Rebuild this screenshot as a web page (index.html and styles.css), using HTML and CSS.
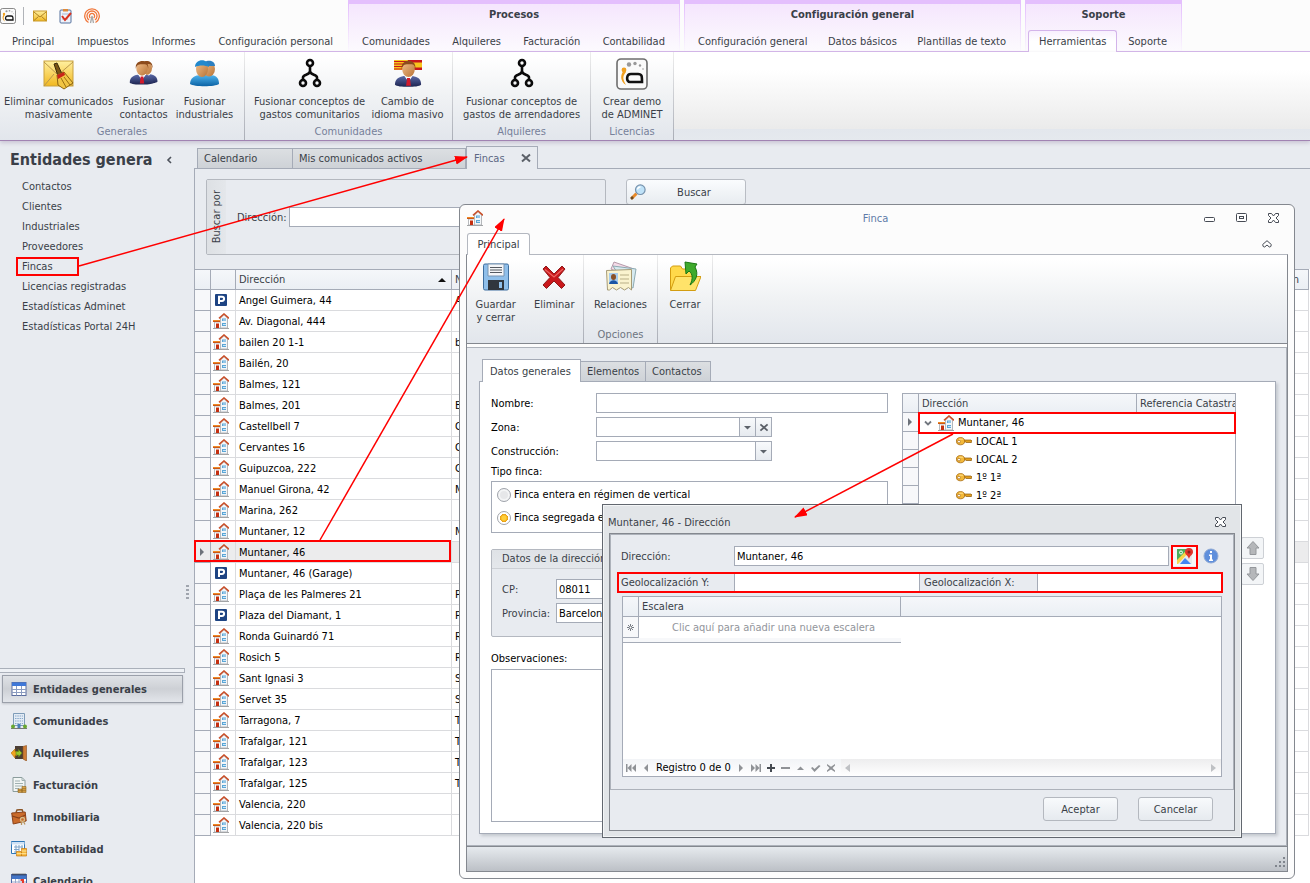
FILE: index.html
```html
<!DOCTYPE html>
<html lang="es">
<head>
<meta charset="utf-8">
<title>Adminet - Fincas</title>
<link rel="stylesheet" href="styles.css">
</head>
<body>
<svg class="defs" width="0" height="0" aria-hidden="true">
  <defs>
    <linearGradient id="suit" x1="0" y1="0" x2="0" y2="1"><stop offset="0" stop-color="#5a6aa8"/><stop offset="1" stop-color="#1d2450"/></linearGradient>
    <linearGradient id="skin" x1="0" y1="0" x2="1" y2="1"><stop offset="0" stop-color="#f3c08c"/><stop offset="1" stop-color="#b87437"/></linearGradient>
    <linearGradient id="blue" x1="0" y1="0" x2="0" y2="1"><stop offset="0" stop-color="#4fb4ee"/><stop offset="1" stop-color="#0b62a4"/></linearGradient>
    <linearGradient id="gold" x1="0" y1="0" x2="0" y2="1"><stop offset="0" stop-color="#fff0a0"/><stop offset="1" stop-color="#f2b820"/></linearGradient>
    <symbol id="house" viewBox="0 0 16 16">
      <path d="M7.500 5L11 1.500 14.500 5V15h-7z" fill="#f4f6f8" stroke="#b4b7bb"/>
      <path d="M1.500 9h6v6h-6z" fill="#fff" stroke="#b9bbbe"/>
      <path d="M0 7h7v2H0z" fill="#f08a24"/><path d="M0 8.500h7" stroke="#c9571a"/>
      <path d="M6 5.300L11 1l5 4.300" fill="none" stroke="#c9502a" stroke-width="1.600"/>
      <path d="M9 5.500h4v2.500H9zM9 10h4v3H9z" fill="#5aa5d6"/>
      <path d="M10 6.500h3v1h-3zM10 11h3v1h-3z" fill="#c9e6f8"/>
      <path d="M3 10.500h3V15H3z" fill="#c52f10"/>
      <path d="M0 15.500h16" stroke="#a2a4a6"/>
    </symbol>
    <symbol id="parking" viewBox="0 0 16 16">
      <rect x="2" y="2" width="12" height="12" rx="1" fill="#1e4483"/>
      <path d="M6 12V4.700h3a2.100 2.100 0 010 4.200H6" fill="none" stroke="#fff" stroke-width="2"/>
    </symbol>
    <symbol id="key" viewBox="0 0 16 16">
      <path d="M7 7h8l1 1-1 2-1-1-1 1-1-1-1 1-1-1H7z" fill="#e3a021" stroke="#8e5906" stroke-width=".7"/>
      <ellipse cx="4.500" cy="8.200" rx="4.100" ry="3.600" fill="#f3b93a" stroke="#a76a10" stroke-width=".8"/>
      <ellipse cx="3" cy="8.600" rx="1.400" ry="1.400" fill="#fff" stroke="#a76a10" stroke-width=".7"/>
      <path d="M3 6.200h4" stroke="#ffe08a"/>
    </symbol>
    <symbol id="fork" viewBox="0 0 32 32">
      <g fill="none" stroke="#0a0a0a" stroke-width="2.600"><circle cx="16" cy="5" r="3"/><circle cx="9" cy="25" r="3"/><circle cx="23" cy="25" r="3"/><path d="M16 8v6M9 22v-2.500c0-3.500 7-2 7-6.500 0 4.500 7 3 7 6.500V22"/></g>
    </symbol>
    <symbol id="logo" viewBox="0 0 32 32">
      <rect x="1" y="1" width="30" height="30" rx="4" fill="#fafafa" stroke="#6d6d6d" stroke-width="1.600"/>
      <path d="M15 16h7c4 0 4 2 4 8H14c-4 0-4-8 1-8" fill="none" stroke="#111" stroke-width="2.600"/>
      <path d="M8 12c-4 5-4 11 2 15-3-6-4-8 0-13z" fill="#f0a020"/><circle cx="8" cy="12" r="2.400" fill="#f0a020"/>
      <circle cx="13" cy="6.500" r="2.200" fill="#999"/><circle cx="19" cy="5.500" r="1.700" fill="#999"/><circle cx="24" cy="7.500" r="1.200" fill="#999"/><circle cx="27" cy="11" r=".8" fill="#999"/>
    </symbol>
    <symbol id="man" viewBox="0 0 32 32">
      <path d="M2 27c0-6 4-8 9-9h9c6 1 9 3 9 9-3 3-24 3-27 0z" fill="url(#suit)"/>
      <path d="M11 17l5 7 5-7z" fill="#fff"/><path d="M14.500 20h3l1 8h-5z" fill="#d21a2b"/>
      <ellipse cx="16" cy="11" rx="6.500" ry="8" fill="url(#skin)"/>
      <path d="M9 11C7 0 25-1 23 11c-1-5-2-5-6-5s-7 0-8 5z" fill="#8c4b1c"/>
    </symbol>
    <symbol id="arrow-down" viewBox="0 0 9 9"><path d="M1 3h7L4.500 6.500z" fill="#5d636b"/></symbol>
    <symbol id="cross-sm" viewBox="0 0 10 10"><path d="M1 1.500l8 7M9 1.500l-8 7" stroke="#5b6068" stroke-width="2"/></symbol>
    <symbol id="cross-outline" viewBox="0 0 11 10"><path d="M.5.500h3l2 2.500 2-2.500h3v2L8 5l2.500 2.500v2h-3l-2-2.500-2 2.500h-3v-2L3 5 .5 2.500z" fill="#fff" stroke="#464b54"/></symbol>
  </defs>
</svg>

<header class="app-head">
  <div class="head-main">
    <div class="quick">
      <button aria-label="Adminet"><svg width="16" height="16"><use href="#logo"/></svg></button>
      <i class="quick-sep"></i>
      <button aria-label="Mensajes"><svg width="16" height="16" viewBox="0 0 16 16"><rect x="1.500" y="3" width="13" height="10" fill="url(#gold)" stroke="#c99a2c"/><path d="M2 4l6 5 6-5M2 12.500l4.500-4M14 12.500l-4.500-4" fill="none" stroke="#b08324"/></svg></button>
      <button aria-label="Tareas"><svg width="16" height="16" viewBox="0 0 16 16"><rect x="2" y="2" width="11" height="13" rx="1" fill="#eef3fb" stroke="#55709d"/><path d="M5 1h5v2.500H5z" fill="#df8b3b"/><path d="M4 6h7M4 11h6" stroke="#a9b9d4"/><path d="M4 8l3 4 6-7" fill="none" stroke="#d8321f" stroke-width="2"/></svg></button>
      <button aria-label="Conexión"><svg width="16" height="16" viewBox="0 0 16 16" fill="none" stroke="#f0763a" stroke-width="1.300"><path d="M4.500 14.500a7.300 7.300 0 117 0M5 12a5 5 0 116 0M6.300 10a2.600 2.600 0 113.400 0"/><path d="M8 8l-1.500 7M8 8l1.500 7" stroke="#a8a8a8"/></svg></button>
    </div>
    <nav class="tabs tabs-main"><button>Principal</button><button>Impuestos</button><button>Informes</button><button>Configuración personal</button></nav>
  </div>
  <section class="context c1"><h2>Procesos</h2><nav class="tabs"><button>Comunidades</button><button>Alquileres</button><button>Facturación</button><button>Contabilidad</button></nav></section>
  <section class="context c2"><h2>Configuración general</h2><nav class="tabs"><button>Configuración general</button><button>Datos básicos</button><button>Plantillas de texto</button></nav></section>
  <section class="context c3"><h2>Soporte</h2><nav class="tabs tabs-support"><button class="active">Herramientas</button><button>Soporte</button></nav></section>
</header>

<div class="ribbon">
  <section class="rgroup g1">
    <div class="rbuttons">
      <button class="w108"><svg width="32" height="32" viewBox="0 0 32 32"><rect x="1" y="3" width="29" height="25" fill="url(#gold)" stroke="#c9a13e"/><path d="M1 4l14 13L30 4M1 28l10-12M30 28L20 17" fill="none" stroke="#b9974c"/><path d="M11 6l3-1 5 11-4 2z" fill="#7a5414" stroke="#3c2b0a"/><path d="M14 17l7-3 9 11-9 6-6-4z" fill="#f1c544" stroke="#8c6511"/><path d="M14 17l7-3 1 3-7 4z" fill="#c92419"/><path d="M18 20l5 9M21 19l6 8" stroke="#9b7012"/></svg><span>Eliminar comunicados<br>masivamente</span></button>
      <button class="w57"><svg width="32" height="32" viewBox="0 0 32 32"><use href="#man" x="5" y="1" width="27" height="27"/><use href="#man" x="0" y="1" width="28" height="28"/></svg><span>Fusionar<br>contactos</span></button>
      <button class="w60"><svg width="32" height="32" viewBox="0 0 32 32"><path d="M1 26c0-6 5-9 11-9h9c6 0 9 3 9 9-4 3-25 3-29 0z" fill="url(#blue)"/><ellipse cx="20" cy="11" rx="6" ry="7.500" fill="url(#skin)"/><path d="M14 8c0-7 12-7 12 0z" fill="#2c7fc0"/><ellipse cx="13" cy="11" rx="6" ry="8" fill="url(#skin)"/><path d="M6 9c0-9 14-9 14 0-4-2-10-2-14 0z" fill="#2389cd"/></svg><span>Fusionar<br>industriales</span></button>
    </div>
    <h3>Generales</h3>
  </section>
  <section class="rgroup g2">
    <div class="rbuttons">
      <button class="w116"><svg width="32" height="32"><use href="#fork"/></svg><span>Fusionar conceptos de<br>gastos comunitarios</span></button>
      <button class="w76"><svg width="32" height="32" viewBox="0 0 32 32"><path d="M2 2h14v10H2z" fill="#f6c51c"/><path d="M2 3.500h14M2 6h14M2 8.500h14M2 11h14" stroke="#c8161d" stroke-width="1.200"/><path d="M16 2h14v10H16z" fill="#c8161d"/><path d="M16 4.500h14v5H16z" fill="#f6c51c"/><use href="#man" x="1" y="0" width="31" height="32"/></svg><span>Cambio de<br>idioma masivo</span></button>
    </div>
    <h3>Comunidades</h3>
  </section>
  <section class="rgroup g3">
    <div class="rbuttons"><button class="w124"><svg width="32" height="32"><use href="#fork"/></svg><span>Fusionar conceptos de<br>gastos de arrendadores</span></button></div>
    <h3>Alquileres</h3>
  </section>
  <section class="rgroup g4">
    <div class="rbuttons"><button class="w76"><svg width="32" height="32"><use href="#logo"/></svg><span>Crear demo<br>de ADMINET</span></button></div>
    <h3>Licencias</h3>
  </section>
</div>

<div class="workspace">
  <aside class="side">
    <div class="side-top">
      <h1><span>Entidades generales</span><button aria-label="Contraer"><svg width="8" height="8" viewBox="0 0 8 8"><path d="M6 1L3 4l3 3" fill="none" stroke="#4d525b" stroke-width="1.600"/></svg></button></h1>
      <nav class="side-links"><a href="#">Contactos</a><a href="#">Clientes</a><a href="#">Industriales</a><a href="#">Proveedores</a><a href="#">Fincas</a><a href="#">Licencias registradas</a><a href="#">Estadísticas Adminet</a><a href="#">Estadísticas Portal 24H</a></nav>
    </div>
    <i class="grip"></i>
    <div class="side-split"></div>
    <nav class="modules">
      <button class="current"><svg width="16" height="16" viewBox="0 0 16 16"><rect x="1" y="1.500" width="14" height="13" fill="#fff" stroke="#5b6d9e"/><path d="M1 1.500h14v3.500H1z" fill="#3f78d8"/><path d="M1 8.500h14M1 11.500h14M5.500 5v9.500M10.500 5v9.500" stroke="#8b9cc0"/></svg>Entidades generales</button>
      <button><svg width="16" height="16" viewBox="0 0 16 16"><path d="M2.500.500h11v12h-11z" fill="#e4ecf5" stroke="#7f9cb8"/><path d="M4 3h8M4 5.500h8M4 8h8M4 10.500h8" stroke="#89a9cb" stroke-dasharray="1.500 .8"/><path d="M6.500 11h3v4h-3z" fill="#4a7fb8"/><path d="M0 15.500h16" stroke="#777" /><circle cx="2" cy="13.500" r="2" fill="#69a82f"/><circle cx="14" cy="13.500" r="2" fill="#69a82f"/></svg>Comunidades</button>
      <button><svg width="16" height="16" viewBox="0 0 16 16"><path d="M4 1h8v13H4z" fill="#4b3d34"/><path d="M12 1.500l3.500-1V16L12 14z" fill="#cd7c35" stroke="#8e501c" stroke-width=".6"/><path d="M0 8l4-4v2.500h2v4H4V13z" fill="#efa421" stroke="#b8720e" stroke-width=".6"/><path d="M11 8L7.500 4.500v2H5v3.500h2.500v2z" fill="#9bc72d" stroke="#5e8616" stroke-width=".6"/></svg>Alquileres</button>
      <button><svg width="16" height="16" viewBox="0 0 16 16"><path d="M2 .5h9l3 3v11H2z" fill="#f2f6f5" stroke="#8b9c9c"/><path d="M11 .5v3h3M4 4h5M4 6.500h8M4 9h8M4 11.500h4" fill="none" stroke="#9fb0b0"/><path d="M7 12h4v3.500H7zM11 9.500h4v6h-4z" fill="#d9a44b" stroke="#8e6520" stroke-width=".6"/><path d="M7 13.700h8M11 11.700h4" stroke="#8e6520" stroke-width=".6"/></svg>Facturación</button>
      <button><svg width="16" height="16" viewBox="0 0 16 16"><path d="M5 3.500L6 1l5-.5 1 2.500" fill="none" stroke="#8b5526" stroke-width="1.500"/><path d="M.7 4l13.500-1 1 9-13 3z" fill="#ca6b2b" stroke="#8b431a"/><path d="M1 7l7 2 6.500-3" fill="none" stroke="#87401a" stroke-width="1.300"/><circle cx="11.500" cy="10.500" r="2" fill="none" stroke="#d8ba86" stroke-width="1.300"/><path d="M12.500 12.500l1.500 3M10.500 12.500V16" stroke="#b9945d" stroke-width="1.300"/></svg>Inmobiliaria</button>
      <button><svg width="16" height="16" viewBox="0 0 16 16"><path d="M.5.500h13v12H.5z" fill="#fff" stroke="#2f78b8"/><path d="M.5 1h13v2.500H.5z" fill="#cfe2f5"/><path d="M3 6h9M3 8.500h5M3 11h4M5 4v8M8 4v6M11 4v4" stroke="#7fa5c9"/><path d="M5.500 10.500h5v4.500h-5zM10.500 7.500h5v7.500h-5z" fill="#f6b73b" stroke="#c97a10" stroke-width=".7"/><path d="M5.500 12.700h10M10.500 10h5" stroke="#fff0b5" stroke-width=".8"/></svg>Contabilidad</button>
      <button><svg width="16" height="16" viewBox="0 0 16 16"><rect x=".5" y="1.500" width="15" height="14" fill="#fff" stroke="#4b68a8"/><path d="M1 2h14v4H1z" fill="#4375c8"/><path d="M1.500 1.500h13" stroke="#333" stroke-dasharray="1 1" stroke-width="2"/><path d="M1 9h14M1 12h14M4.500 6v9M8 6v9M11.500 6v9" stroke="#9aa8cb"/><path d="M9.500 7h2.500v4" stroke="#e5392b" stroke-width="2" fill="none"/></svg>Calendario</button>
    </nav>
  </aside>

  <main class="doc">
    <nav class="doc-tabs"><button class="t1">Calendario</button><button class="t2">Mis comunicados activos</button><button class="t3 active">Fincas<svg width="10" height="10"><use href="#cross-sm"/></svg></button></nav>
    <div class="doc-body">
      <form class="search">
        <fieldset><div class="vlabel"><span>Buscar por</span></div><label for="q">Dirección:</label><input id="q" type="text"></fieldset>
        <button type="button"><svg width="16" height="16" viewBox="0 0 16 16"><path d="M1.500 14.500l5-5" stroke="#e88a2a" stroke-width="3"/><path d="M1 15l2-2" stroke="#6d4b22" stroke-width="2.500"/><circle cx="10.300" cy="5.700" r="4.800" fill="#bfe2f8" stroke="#7591ac" stroke-width="1.200"/><path d="M7.500 5.500a3 3 0 013-2.500" stroke="#fff" stroke-width="1.300" fill="none"/></svg><span>Buscar</span></button>
      </form>
      <table class="grid">
        <colgroup><col class="k1"><col class="k2"><col class="k3"><col><col class="k5"></colgroup>
        <thead><tr><th></th><th></th><th>Dirección<svg width="8" height="5" viewBox="0 0 8 5"><path d="M0 5l4-4 4 4z" fill="#111"/></svg></th><th>Nombre</th><th class="end">Población</th></tr></thead>
        <tbody>
          <tr><td></td><td><svg><use href="#parking"/></svg></td><td>Angel Guimera, 44</td><td>A</td><td></td></tr>
          <tr><td></td><td><svg><use href="#house"/></svg></td><td>Av. Diagonal, 444</td><td></td><td></td></tr>
          <tr><td></td><td><svg><use href="#house"/></svg></td><td>bailen 20 1-1</td><td>b</td><td></td></tr>
          <tr><td></td><td><svg><use href="#house"/></svg></td><td>Bailén, 20</td><td></td><td></td></tr>
          <tr><td></td><td><svg><use href="#house"/></svg></td><td>Balmes, 121</td><td></td><td></td></tr>
          <tr><td></td><td><svg><use href="#house"/></svg></td><td>Balmes, 201</td><td>B</td><td></td></tr>
          <tr><td></td><td><svg><use href="#house"/></svg></td><td>Castellbell 7</td><td>C</td><td></td></tr>
          <tr><td></td><td><svg><use href="#house"/></svg></td><td>Cervantes 16</td><td>C</td><td></td></tr>
          <tr><td></td><td><svg><use href="#house"/></svg></td><td>Guipuzcoa, 222</td><td>G</td><td></td></tr>
          <tr><td></td><td><svg><use href="#house"/></svg></td><td>Manuel Girona, 42</td><td>M</td><td></td></tr>
          <tr><td></td><td><svg><use href="#house"/></svg></td><td>Marina, 262</td><td></td><td></td></tr>
          <tr><td></td><td><svg><use href="#house"/></svg></td><td>Muntaner, 12</td><td>M</td><td></td></tr>
          <tr class="sel"><td><svg class="cur" viewBox="0 0 5 8"><path d="M0 0l4 4-4 4z" fill="#6d727a"/></svg></td><td><svg><use href="#house"/></svg></td><td>Muntaner, 46</td><td></td><td></td></tr>
          <tr><td></td><td><svg><use href="#parking"/></svg></td><td>Muntaner, 46 (Garage)</td><td></td><td></td></tr>
          <tr><td></td><td><svg><use href="#house"/></svg></td><td>Plaça de les Palmeres 21</td><td>P</td><td></td></tr>
          <tr><td></td><td><svg><use href="#parking"/></svg></td><td>Plaza del Diamant, 1</td><td>P</td><td></td></tr>
          <tr><td></td><td><svg><use href="#house"/></svg></td><td>Ronda Guinardó 71</td><td>R</td><td></td></tr>
          <tr><td></td><td><svg><use href="#house"/></svg></td><td>Rosich 5</td><td>R</td><td></td></tr>
          <tr><td></td><td><svg><use href="#house"/></svg></td><td>Sant Ignasi 3</td><td>S</td><td></td></tr>
          <tr><td></td><td><svg><use href="#house"/></svg></td><td>Servet 35</td><td>S</td><td></td></tr>
          <tr><td></td><td><svg><use href="#house"/></svg></td><td>Tarragona, 7</td><td>T</td><td></td></tr>
          <tr><td></td><td><svg><use href="#house"/></svg></td><td>Trafalgar, 121</td><td>T</td><td></td></tr>
          <tr><td></td><td><svg><use href="#house"/></svg></td><td>Trafalgar, 123</td><td>T</td><td></td></tr>
          <tr><td></td><td><svg><use href="#house"/></svg></td><td>Trafalgar, 125</td><td>T</td><td></td></tr>
          <tr><td></td><td><svg><use href="#house"/></svg></td><td>Valencia, 220</td><td></td><td></td></tr>
          <tr><td></td><td><svg><use href="#house"/></svg></td><td>Valencia, 220 bis</td><td></td><td></td></tr>
        </tbody>
      </table>
    </div>
  </main>
</div>

<section class="window" aria-label="Finca">
  <div class="win-title">
    <svg width="16" height="16"><use href="#house"/></svg>
    <h2>Finca</h2>
    <div class="win-btns">
      <button aria-label="Minimizar"><svg width="11" height="10" viewBox="0 0 11 10"><rect x=".5" y="4.500" width="10" height="4" rx="1" fill="#fff" stroke="#464b54"/></svg></button>
      <button aria-label="Maximizar"><svg width="11" height="10" viewBox="0 0 11 10"><rect x=".5" y=".5" width="10" height="8" rx="1" fill="#fff" stroke="#464b54"/><rect x="3.500" y="3.500" width="4" height="2" fill="#fff" stroke="#464b54"/></svg></button>
      <button aria-label="Cerrar ventana"><svg width="11" height="10"><use href="#cross-outline"/></svg></button>
    </div>
  </div>
  <div class="win-tabs"><button>Principal</button><button class="fold" aria-label="Plegar"><svg width="10" height="8" viewBox="0 0 10 8"><path d="M.7 4.500L5 .7l4.300 3.800-.5 2-1.500.5L5 5 2.700 7l-1.500-.5z" fill="#fff" stroke="#464b54"/></svg></button></div>
  <div class="win-frame">
    <div class="win-ribbon">
      <section class="rgroup h1">
        <div class="rbuttons">
          <button class="w57"><svg width="32" height="32" viewBox="0 0 32 32"><rect x="3.500" y="3" width="25" height="26" rx="1.500" fill="#8fbfea" stroke="#3f6f9f"/><path d="M8 3h16v12H8z" fill="#f5f6f8" stroke="#7895b2"/><path d="M10 6.500h12M10 9h12M10 11.500h12" stroke="#555a61" stroke-width="1.100"/><path d="M8 19h16v10H8z" fill="#30363e"/><path d="M19 21h3v6h-3z" fill="#8fbfea"/></svg><span>Guardar<br>y cerrar</span></button>
          <i class="rsep"></i>
          <button class="w57"><svg width="32" height="32" viewBox="0 0 32 32"><path d="M5 8l3-3 8 8 8-8 3 3-7 8.500 7 7.500-3.500 3.500L16 20l-7.500 7.500L5 24l7-7.500z" fill="#c9181c" stroke="#8e1a1a"/><path d="M7 8.500l9 7.500 9-8" fill="none" stroke="#ed6460" stroke-width="1.300"/></svg><span>Eliminar</span></button>
        </div><h3></h3>
      </section>
      <section class="rgroup h2">
        <div class="rbuttons"><button class="w70"><svg width="32" height="32" viewBox="0 0 32 32"><path d="M6 8L9 1l20 7-4 10z" fill="#f5dbe8" stroke="#b49aa9"/><path d="M8 5l23 3-3 19-8-3z" fill="#d6eaf0" stroke="#8daab1"/><path d="M1.500 9.500l25-1V29l-3-2.500-4 2.500-4-2.500-4 2.500-4-2.500-3 2.500h-2z" fill="#faf3cf" stroke="#a69b77"/><path d="M4 12h9v11H4z" fill="#a7cdee"/><ellipse cx="8.500" cy="16" rx="2.500" ry="3" fill="#8a5126"/><path d="M4 23c1-5 8-5 9 0z" fill="#1c56a5"/><path d="M15 14h9M15 18h9M15 22h9" stroke="#b9af87"/></svg><span>Relaciones</span></button></div><h3>Opciones</h3>
      </section>
      <section class="rgroup h3">
        <div class="rbuttons"><button class="w52"><svg width="32" height="32" viewBox="0 0 32 32"><path d="M1.500 29V7l2-2h8l2 3h11v21z" fill="#ffd94a" stroke="#d39d10"/><path d="M1.500 29.500l5-14H32l-5.500 14z" fill="#ffe36a" stroke="#d39d10"/><path d="M16 1l12 2-2 3c4 7 1 14-5 18 3-6 3-11-1-14l-3 3z" fill="#3faa2c" stroke="#1b7714"/></svg><span>Cerrar</span></button></div><h3></h3>
      </section>
    </div>
    <div class="win-body">
      <nav class="form-tabs"><button class="active f1">Datos generales</button><button class="f2">Elementos</button><button class="f3">Contactos</button></nav>
      <div class="sheet">
        <form class="fields">
          <div class="row"><label for="nombre">Nombre:</label><input id="nombre" type="text"></div>
          <div class="row"><label for="zona">Zona:</label><div class="combo"><select id="zona"><option></option></select><i><svg width="9" height="9"><use href="#arrow-down"/></svg></i><button type="button" aria-label="Borrar"><svg width="10" height="9"><use href="#cross-sm"/></svg></button></div></div>
          <div class="row row-tight"><label for="cons">Construcción:</label><div class="combo"><select id="cons"><option></option></select><i><svg width="9" height="9"><use href="#arrow-down"/></svg></i></div></div>
          <div class="row row-tight" id="tipo">Tipo finca:</div>
          <div class="radios" role="radiogroup" aria-labelledby="tipo"><label><input type="radio" name="t">Finca entera en régimen de vertical</label><label><input type="radio" name="t" checked>Finca segregada en división horizontal</label></div>
          <section class="address"><h4>Datos de la dirección</h4><div class="address-in"><label for="cp">CP:</label><input id="cp" type="text" value="08011"><label for="prov">Provincia:</label><input id="prov" type="text" value="Barcelona"></div></section>
          <label class="obs" for="obs">Observaciones:</label>
          <textarea id="obs"></textarea>
        </form>
        <div class="tree-box">
          <table class="tree">
            <colgroup><col class="q1"><col class="q2"><col></colgroup>
            <thead><tr><th></th><th>Dirección</th><th>Referencia Catastral</th></tr></thead>
            <tbody>
              <tr class="root"><td><svg class="cur" viewBox="0 0 5 8"><path d="M0 0l4 4-4 4z" fill="#6d727a"/></svg></td><td colspan="2"><div><svg width="8" height="8" viewBox="0 0 8 8"><path d="M1 2.500l3 3 3-3" fill="none" stroke="#72777f" stroke-width="1.800"/></svg><svg width="16" height="16"><use href="#house"/></svg>Muntaner, 46</div></td></tr>
              <tr><td></td><td colspan="2"><div class="leaf"><svg width="16" height="16"><use href="#key"/></svg>LOCAL 1</div></td></tr>
              <tr><td></td><td colspan="2"><div class="leaf"><svg width="16" height="16"><use href="#key"/></svg>LOCAL 2</div></td></tr>
              <tr><td></td><td colspan="2"><div class="leaf"><svg width="16" height="16"><use href="#key"/></svg>1º 1ª</div></td></tr>
              <tr><td></td><td colspan="2"><div class="leaf"><svg width="16" height="16"><use href="#key"/></svg>1º 2ª</div></td></tr>
            </tbody>
          </table>
        </div>
        <div class="order">
          <button aria-label="Subir"><svg width="14" height="14" viewBox="0 0 14 14"><path d="M7 .5l6 6.500h-3v6.500H4V7H1z" fill="#b5b7ba" stroke="#94979b"/></svg></button>
          <button aria-label="Bajar"><svg width="14" height="14" viewBox="0 0 14 14"><path d="M7 13.500L1 7h3V.5h6V7h3z" fill="#b5b7ba" stroke="#94979b"/></svg></button>
        </div>
      </div>
    </div>
    <footer class="status"><svg width="11" height="11" viewBox="0 0 11 11" fill="#80858d"><path d="M8 0h2v2H8zM8 4h2v2H8zM4 4h2v2H4zM8 8h2v2H8zM4 8h2v2H4zM0 8h2v2H0z"/></svg></footer>
  </div>
</section>

<section class="dialog" role="dialog" aria-labelledby="dlg">
  <div class="dlg-title"><h2 id="dlg">Muntaner, 46 - Dirección</h2><button aria-label="Cerrar diálogo"><svg width="11" height="10"><use href="#cross-outline"/></svg></button></div>
  <div class="dlg-frame">
    <div class="dlg-panel">
      <div class="dlg-row"><label for="dir">Dirección:</label><input id="dir" type="text" value="Muntaner, 46"><button class="map" aria-label="Mapa"><svg width="16" height="16" viewBox="0 0 16 16"><path d="M0 1h15v15H0z" fill="#e8eaec"/><path d="M0 1h10L5 9l-5 5z" fill="#4aae5c"/><path d="M0 12L10 2l2 2L1 16H0z" fill="#f8d549"/><path d="M3 16l5-6 6 6z" fill="#4285f4"/><circle cx="4" cy="4.500" r="1.500" fill="none" stroke="#fff"/><path d="M12 11C11 7 8 7 8 4a4 4 0 018 0c0 3-3 3-4 7z" fill="#e0332b"/><circle cx="12" cy="4" r="1.500" fill="#88211c"/></svg></button><svg class="info" width="16" height="16" viewBox="0 0 16 16"><circle cx="8" cy="8" r="7" fill="#5f8fdc" stroke="#8fa9d4"/><path d="M7 3h2v2H7zM6 6.500h3v5h1V13H6v-1.500h1V8H6z" fill="#fff"/></svg></div>
      <div class="geo"><label for="gy">Geolocalización Y:</label><input id="gy" type="text"><label for="gx">Geolocalización X:</label><input id="gx" type="text"></div>
      <div class="stairs">
        <table><colgroup><col class="q1"><col class="s2"><col></colgroup>
          <thead><tr><th></th><th>Escalera</th><th></th></tr></thead>
          <tbody><tr><td class="star"><svg width="9" height="9" viewBox="0 0 9 9"><path d="M4.500 1v7M1 4.500h7M2 2l5 5M7 2L2 7" stroke="#777c84"/><circle cx="4.500" cy="4.500" r="1" fill="#fff"/></svg></td><td class="hint">Clic aquí para añadir una nueva escalera</td><td></td></tr><tr class="thin"><td colspan="2"></td><td></td></tr></tbody>
        </table>
        <div class="pager">
          <button aria-label="Primero"><svg viewBox="0 0 10 8"><path d="M0 0h1.500v8H0zM5.500 0v8l-4-4zM10 0v8L6 4z"/></svg></button>
          <button aria-label="Anterior"><svg viewBox="0 0 10 8"><path d="M7 0v8L3 4z"/></svg></button>
          <span>Registro 0 de 0</span>
          <button aria-label="Siguiente"><svg viewBox="0 0 10 8"><path d="M3 0l4 4-4 4z"/></svg></button>
          <button aria-label="Último"><svg viewBox="0 0 10 8"><path d="M0 0l4 4-4 4zM4.500 0l4 4-4 4zM8.500 0H10v8H8.500z"/></svg></button>
          <button aria-label="Añadir" class="on"><svg viewBox="0 0 10 8"><path d="M4 0h2v3h3v2H6v3H4V5H1V3h3z"/></svg></button>
          <button aria-label="Quitar"><svg viewBox="0 0 10 8"><path d="M0 3h9v2H0z"/></svg></button>
          <button aria-label="Editar"><svg viewBox="0 0 10 8"><path d="M1 6h7L4.500 2.500z"/></svg></button>
          <button aria-label="Confirmar"><svg viewBox="0 0 10 8"><path d="M0 4l1.500-1 2 2L8 1l1.500 1-6 6z"/></svg></button>
          <button aria-label="Anular"><svg viewBox="0 0 10 8"><path d="M1 0l4 2.700L9 0v1.500L6.500 4 9 6.500V8L5 5.500 1 8V6.500L3.500 4 1 1.500z"/></svg></button>
          <div class="hscroll"><svg viewBox="0 0 10 8"><path d="M6 0v8L1 4z"/></svg><svg viewBox="0 0 10 8"><path d="M3 0l5 4-5 4z"/></svg></div>
        </div>
      </div>
    </div>
    <div class="dlg-actions"><button>Aceptar</button><button>Cancelar</button></div>
  </div>
</section>

<svg class="notes" width="1310" height="883" viewBox="0 0 1310 883" aria-hidden="true">
  <defs><marker id="head" markerUnits="userSpaceOnUse" markerWidth="14" markerHeight="10" refX="12" refY="4.500" orient="auto"><path d="M0 0l13 4.500L0 9z" fill="#f00"/></marker></defs>
  <g fill="none" stroke="#f00" stroke-width="2"><path d="M17 258h61v17H17zM195 541h255v20H195zM919 413h316v20H919zM1172 546h25v22h-25zM618 573h604v19H618z"/></g>
  <g stroke="#f00" stroke-width="1.500"><path d="M79 266L467 157" marker-end="url(#head)"/><path d="M320 540L504 219" marker-end="url(#head)"/><path d="M953 434L795 517" marker-end="url(#head)"/></g>
</svg>
</body>
</html>
```
FILE: styles.css
```css
* { box-sizing: border-box; }
html { height: 100%; }
body {
  margin: 0; height: 100vh; display: flex; flex-direction: column; position: relative; overflow: hidden;
  font: 11px/13px "DejaVu Sans Condensed", "Noto Sans", sans-serif; color: #3a3f48; background: #e8ebf0;
}
button, input, select, textarea { font: inherit; color: inherit; margin: 0; padding: 0; border: 0; background: none; border-radius: 0; outline: 0; }
button { white-space: nowrap; }
svg { display: block; flex: none; }
h1, h2, h3, h4 { margin: 0; font: inherit; }
a { color: inherit; text-decoration: none; }
label { white-space: nowrap; }
table { border-collapse: separate; border-spacing: 0; table-layout: fixed; width: 100%; }
th, td { padding: 0; font-weight: normal; text-align: left; white-space: nowrap; overflow: hidden; }
fieldset { margin: 0; padding: 0; border: 0; min-width: 0; }
.defs { position: absolute; }

/* Header */
.app-head { flex: none; display: flex; height: 52px; background: #fcfcfc; border-bottom: 1px solid #d3b4ea; }
.head-main { flex: 0 0 348px; display: flex; flex-direction: column; justify-content: space-between; }
.quick { display: flex; align-items: center; height: 31px; }
.quick button + button { margin-left: 10px; }
.quick-sep { width: 1px; height: 18px; margin: 0 8px 0 7px; background: #b0b3b8; }
.tabs { display: flex; justify-content: space-between; height: 20px; padding: 0 14px 0 13px; }
.tabs-main { padding: 0 15px 0 12px; }
.context { flex: none; margin-right: 4px; display: flex; flex-direction: column; justify-content: space-between; background: linear-gradient(#f5e6fd, #fcfafe); border: 1px solid; border-width: 4px 1px 0; border-image: linear-gradient(#e4bffd, #e4bffd 8%, #fbf8fe) 4 1 0; }
.context h2 { font-weight: bold; text-align: center; line-height: 22px; }
.c1 { width: 332px; }
.c2 { width: 337px; }
.c3 { width: 157px; }
.tabs-support { padding: 0 14px 0 2px; height: 22px; margin-bottom: -1px; }
.tabs button.active { padding: 0 10px; background: linear-gradient(#f8f0fe, #fff 50%); border: 1px solid #d3b4ea; border-bottom: 0; border-radius: 3px 3px 0 0; }

/* Ribbon */
.ribbon { flex: none; display: flex; height: 89px; background: linear-gradient(#fff 20%, #ebebeb 87%, #e3e7ed 88%, #e5e9ee); border-bottom: 1px solid #a183b2; box-shadow: 0 2px 4px #c9c4d4; position: relative; }
.rgroup { display: flex; flex-direction: column; justify-content: space-between; border-right: 1px solid #b9bcc3; border-image: linear-gradient(#eee, #a9adb6) 1; border-width: 0 1px 0 0; background: linear-gradient(#fff 5%, #f0f2f4 50%, #e2e6ec); }
.rgroup h3 { text-align: center; color: #76809a; line-height: 17px; min-height: 17px; }
.rbuttons { display: flex; justify-content: center; padding-top: 6px; }
.rbuttons button { display: flex; flex-direction: column; align-items: center; gap: 5px; }
.g1 { width: 245px; } .g1 .rbuttons { padding-right: 5px; } .g2 { width: 208px; } .g3 { width: 138px; } .g4 { width: 83px; }
.w108 { width: 112px; } .w57 { width: 58px; } .w60 { width: 64px; } .w116 { width: 118px; } .w76 { width: 78px; } .w124 { width: 124px; } .w70 { width: 70px; } .w52 { width: 52px; }
.rsep { width: 1px; height: 60px; background: linear-gradient(#fff, #9ca0a8, #fff); }

/* Side panel */
.workspace { flex: 1; min-height: 0; display: flex; }
.side { flex: 0 0 194px; display: flex; flex-direction: column; position: relative; }
.side-top { flex: 1; min-height: 0; padding: 9px 0 0 10px; }
.side h1 { display: flex; align-items: center; gap: 12px; font-size: 16px; line-height: 20px; font-weight: bold; }
.side h1 span { width: 143px; overflow: hidden; white-space: nowrap; }
.side-links { display: flex; flex-direction: column; padding: 7px 0 0 12px; line-height: 20px; }
.grip { position: absolute; left: 186px; top: 444px; width: 3px; height: 14px; background: repeating-linear-gradient(#a0a5ae 0 2px, transparent 2px 4px); }
.side-split { flex: none; height: 5px; width: 185px; border: 1px solid #aab0ba; border-left: 0; background: #eef1f5; }
.modules { flex: 0 0 210px; overflow: hidden; padding-left: 2px; font-weight: bold; }
.modules button { display: flex; align-items: center; gap: 6px; width: 181px; height: 32px; padding-left: 9px; font-weight: bold; }
.modules button.current { height: 28px; margin: 2px 0; border: 1px solid #9ba0aa; padding-left: 8px; background: linear-gradient(#dfe2e6, #cdd0d5 50%, #e2e5ea); box-shadow: 0 1px 2px #c0c4ca; }

/* Documents */
.doc { flex: 1; min-width: 0; display: flex; flex-direction: column; padding-top: 5px; }
.doc-tabs { display: flex; align-items: flex-end; padding-left: 3px; border-bottom: 1px solid #a5abb7; }
.doc-tabs button, .form-tabs button { height: 20px; text-align: left; padding: 0 6px; background: linear-gradient(#dcdfe2, #ced2d7); border: 1px solid #a5abb7; border-bottom: 0; }
.doc-tabs .t1 { width: 96px; } .doc-tabs .t2 { width: 173px; border-left: 0; }
.doc-tabs .t3 { width: 72px; height: 23px; margin-bottom: -1px; padding: 0 6px 0 7px; display: flex; align-items: center; justify-content: space-between; background: #e8ebf0; color: #5c6784; }
.doc-body { flex: 1; min-height: 0; background: #fff; border-left: 1px solid #a5abb7; }
.search { display: flex; gap: 20px; padding: 10px 10px 14px 11px; background: #e8ebf0; }
.search fieldset { display: flex; align-items: center; width: 400px; height: 76px; border: 1px solid #b4b8bf; border-radius: 2px; }
.vlabel { width: 19px; height: 74px; margin-right: 11px; display: grid; place-items: center; background: linear-gradient(90deg, #dde0e4, #e4e7eb); }
.vlabel span { writing-mode: vertical-rl; transform: rotate(180deg); }
.search label { width: 52px; }
.search input { flex: 1; height: 20px; margin-right: 10px; background: #fff; border: 1px solid #a5abb7; }
.search > button { display: flex; align-items: center; width: 120px; height: 26px; padding: 0 3px; background: linear-gradient(#fafcfe, #e8ecf0); border: 1px solid #b9bdc4; border-radius: 3px; }
.search > button span { flex: 1; }
.grid { width: calc(100% - 1px); color: #000; }
.k1 { width: 16px; } .k2 { width: 25px; } .k3 { width: 216px; } .k5 { width: 120px; }
.grid th, .tree th, .stairs th { color: #3a3f48; background: linear-gradient(#f5f7fa, #ebeff4); border: 1px solid #a5abb7; border-width: 1px 1px 1px 0; }
.grid th { height: 21px; padding-left: 3px; }
.grid th:last-child, .grid td:last-child { padding-right: 9px; text-align: right; }
.grid th svg { float: right; margin: 4px 5px 0 0; }
.grid td { height: 21px; padding-left: 3px; border: 1px solid #dadbde; border-width: 0 1px 1px 0; }
.grid td:first-child, .tree td:first-child { padding-left: 5px; background: #f7f8fa; border-color: #a5abb7; }
.grid td:nth-child(2) { padding-left: 2px; }
.grid td:nth-child(2) svg { width: 16px; height: 16px; }
.grid .sel td { background: #ececed; }
svg.cur { width: 5px; height: 8px; }

/* Finca window */
.window { position: absolute; left: 459px; right: 15px; top: 204px; height: 675px; display: flex; flex-direction: column; padding: 0 6px 6px; background: #fcfcfc; border: 1px solid #84888f; border-radius: 6px; }
.win-title { flex: none; display: flex; align-items: center; height: 28px; padding: 0 9px 2px 1px; }
.win-title h2 { flex: 1; text-align: center; color: #5e7ba8; padding-left: 64px; }
.win-btns { display: flex; gap: 21px; }
.win-tabs { flex: none; display: flex; align-items: center; justify-content: space-between; height: 22px; margin-bottom: -1px; padding: 0 16px 0 1px; position: relative; }
.win-tabs button:first-child { width: 63px; height: 22px; background: #fff; border: 1px solid #b4b8c0; border-bottom: 0; border-radius: 3px 3px 0 0; }
.win-frame { flex: 1; min-height: 0; display: flex; flex-direction: column; border: 1px solid #84888f; border-top-color: #b4b8c0; }
.win-ribbon { flex: none; display: flex; height: 89px; background: linear-gradient(#fff 5%, #f0f2f4 50%, #e2e6ec); border-bottom: 1px solid #84888f; }
.win-ribbon h3 { color: #6d747f; }
.h1 { width: 117px; } .h2 { width: 74px; } .h3 { width: 55px; }
.win-body { flex: 1; min-height: 0; display: flex; flex-direction: column; margin-top: 3px; padding: 11px 10px 11px 12px; border: 1px solid #adb2ba; border-left: 0; background: #e8ebf0; }
.form-tabs { flex: none; display: flex; align-items: flex-end; padding-left: 3px; position: relative; margin-bottom: -1px; }
.form-tabs button { height: 21px; border-bottom: 1px solid #a5abb7; border-left: 0; }
.form-tabs button.active { height: 23px; background: #fff; border: 1px solid #a5abb7; border-bottom: 0; padding: 0 7px; }
.f1 { width: 99px; } .f2 { width: 65px; } .f3 { width: 65px; }
.sheet { flex: 1; min-height: 0; display: flex; padding: 11px; color: #000; background: #fff; border: 1px solid #a5abb7; box-shadow: 2px 2px 3px #c3c7cd; }
.fields { flex: 0 0 397px; margin-right: 14px; display: flex; flex-direction: column; }
.fields input[type=text], .combo, .fields textarea { background: #fff; border: 1px solid #a5abb7; }
.row { display: flex; align-items: center; height: 20px; margin-bottom: 4px; }
.row-tight { margin-bottom: 0; }
.row label { width: 105px; }
.row input { flex: 1; height: 20px; }
.combo { display: flex; width: 176px; height: 20px; }
.combo select { flex: 1; appearance: none; }
.combo i, .combo button { width: 16px; display: grid; place-items: center; border-left: 1px solid #a5abb7; background: linear-gradient(#f8fafc, #e6eaef); }
.radios { flex: none; height: 52px; padding: 1px 5px; display: flex; flex-direction: column; border: 1px solid #a5abb7; }
.radios label { display: flex; align-items: center; gap: 3px; height: 23px; }
.radios input { appearance: none; width: 14px; height: 14px; border: 1px solid #a0a4ab; border-radius: 50%; background: #e6e7e9; box-shadow: inset 0 0 0 2px #f4f5f6; }
.radios input:checked { background: radial-gradient(circle, #ffcf3a 2px, #e79a10 4px, #fff 4px); box-shadow: none; }
.address { flex: none; margin-top: 16px; height: 88px; color: #3a3f48; background: #e8ebf0; border: 1px solid #b4b8c0; border-radius: 2px; }
.address h4 { line-height: 18px; padding-left: 10px; background: linear-gradient(#dfe2e6, #e4e7eb); border-bottom: 1px solid #cdd0d5; }
.address-in { display: grid; grid-template-columns: 54px 1fr; gap: 4px 0; align-items: center; padding: 10px; }
.address-in input { height: 20px; padding-left: 2px; color: #000; }
.obs { line-height: 20px; margin-top: 12px; }
.fields textarea { flex: 1; resize: none; }
.tree-box { flex: 1; min-width: 0; border: 1px solid #a5abb7; border-top: 0; }
.tree th { height: 20px; padding-left: 3px; }
.tree th:last-child { border-right: 0; }
.q1 { width: 16px; } .q2 { width: 218px; } .s2 { width: 262px; }
.tree td { height: 18px; padding: 0; }
.tree td:first-child { border: 1px solid #a5abb7; border-width: 0 1px 1px 0; }
.tree .root td { height: 19px; }
.tree td div { display: flex; align-items: center; gap: 4px; height: 17px; padding-left: 5px; }
.tree td div svg + svg { margin: 0 0 0 2px; }
.tree td .leaf { padding-left: 37px; }
.order { display: flex; flex-direction: column; gap: 4px; margin-left: 5px; padding-top: 144px; }
.order button { width: 23px; height: 22px; display: grid; place-items: center; background: #f3f5f7; border: 1px solid #cdd0d5; border-radius: 2px; }
.status { flex: none; height: 25px; display: flex; justify-content: flex-end; align-items: flex-end; padding: 0 1px 3px 0; border-top: 1px solid #84888f; background: linear-gradient(#e6eaee, #bcc0c6); }

/* Address dialog */
.dialog { position: absolute; left: 602px; right: 68px; top: 504px; height: 334px; display: flex; flex-direction: column; padding: 0 6px 6px; border: 1px solid #62676f; background: #e2e5e8; box-shadow: inset 0 0 0 1px #f4f6f7; }
.dlg-title { flex: none; height: 28px; display: flex; justify-content: space-between; align-items: center; padding: 6px 9px 0 0; }
.dlg-title h2 { margin-left: -1px; }
.dlg-frame { flex: 1; min-height: 0; display: flex; flex-direction: column; background: #e8ebf0; border: 1px solid #84888f; }
.dlg-panel { flex: 1; min-height: 0; display: flex; flex-direction: column; padding: 11px 11px 12px 10px; border: 1px solid #adb2ba; }
.dlg-row, .geo { flex: none; display: flex; align-items: center; height: 20px; }
.dlg-row label { flex: 0 0 113px; }
.dlg-row input { flex: 1; min-width: 0; height: 20px; padding-left: 2px; color: #000; background: #fff; border: 1px solid #a5abb7; }
.map { width: 27px; height: 20px; margin: 0 5px 0 2px; display: grid; place-items: center; background: #f6f7f9; }
.info { margin-right: 3px; }
.geo { margin: 7px 0 5px; height: 18px; }
.geo label { flex: 0 0 113px; }
.geo label + input + label { flex-basis: 117px; padding-left: 4px; }
.geo input { flex: 1; min-width: 0; height: 18px; background: #fff; border: 1px solid #a5abb7; border-width: 0 1px; }
.geo input:last-child { border-right: 0; }
.stairs { flex: 1; min-height: 0; display: flex; flex-direction: column; justify-content: space-between; margin-left: 1px; background: #fff; border: 1px solid #a5abb7; border-top: 0; }
.stairs th { height: 21px; padding-left: 3px; }
.stairs th:last-child { border-right: 0; }
.stairs td { height: 21px; }
.stairs .star { padding-left: 3px; background: #f7f8fa; border: 1px solid #a5abb7; border-width: 0 1px 1px 0; }
.stairs .hint { padding-left: 33px; color: #92959b; }
.stairs .thin td { height: 5px; }
.stairs .thin td:first-child { background: #f7f8fa; border-bottom: 1px solid #a5abb7; }
.pager { display: flex; align-items: center; height: 17px; padding-left: 3px; gap: 5px; color: #000; background: linear-gradient(#f2f4f7, #fff); }
.pager svg { width: 10px; height: 8px; fill: #8f9296; }
.pager .on svg { fill: #444950; }
.hscroll { flex: 1; display: flex; justify-content: space-between; align-items: center; height: 17px; padding: 0 3px; background: linear-gradient(#ededee, #fff); }
.hscroll svg { fill: #bfc1c4; }
.dlg-actions { flex: none; height: 40px; display: flex; justify-content: flex-end; gap: 20px; padding: 7px 21px 9px 0; }
.dlg-actions button { width: 75px; height: 24px; background: linear-gradient(#f8fafc, #e6eaef); border: 1px solid #b4b8bf; border-radius: 3px; }

.notes { position: absolute; left: 0; top: 0; pointer-events: none; }
```
